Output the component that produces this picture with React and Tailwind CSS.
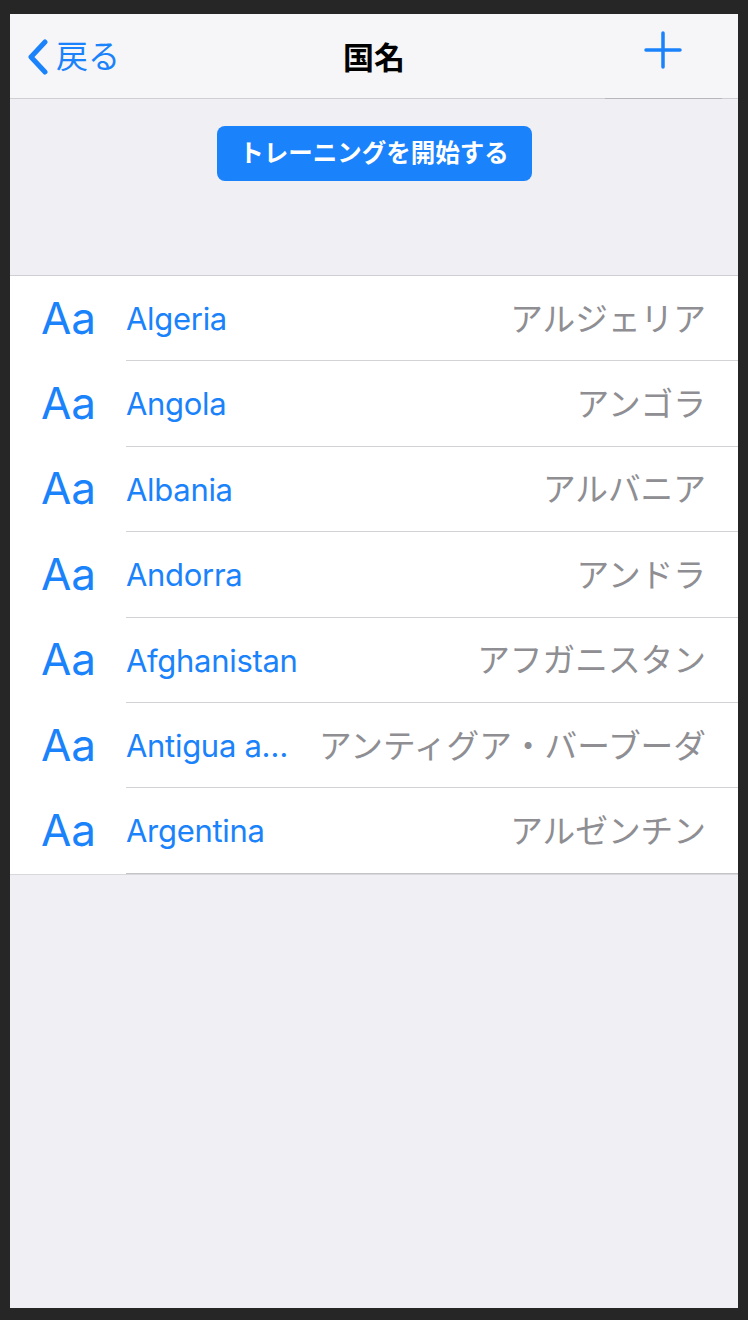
import React from "react";

const rows = [
  { en: "Algeria", ja: "アルジェリア" },
  { en: "Angola", ja: "アンゴラ" },
  { en: "Albania", ja: "アルバニア" },
  { en: "Andorra", ja: "アンドラ" },
  { en: "Afghanistan", ja: "アフガニスタン" },
  { en: "Antigua and Barbuda", ja: "アンティグア・バーブーダ" },
  { en: "Argentina", ja: "アルゼンチン" },
];

const font = { fontFamily: '"Inter", "Noto Sans CJK JP", sans-serif' };

const App = () => {
  return (
    <div className="w-[748px] h-[1320px] bg-[#262626] pt-[14px] pb-[12px] px-[10px]" style={font}>
      <div className="h-full bg-[#efeff4] flex flex-col">
        {/* NAV BAR */}
        <header className="relative h-[85px] shrink-0 bg-[#f6f6f8] border-b border-[#cfcfd3] flex items-center justify-between">
          <button className="flex items-center text-[#1a82fb] pl-[16px] pt-[2px]">
            <svg width="24" height="36" viewBox="0 0 24 36" className="mr-[6px]">
              <path d="M19 3 L5 18 L19 33" fill="none" stroke="#1a82fb" strokeWidth="5" strokeLinecap="round" strokeLinejoin="round" />
            </svg>
            <span className="text-[32px] leading-none">戻る</span>
          </button>
          <h1 className="absolute left-1/2 -translate-x-1/2 text-[31px] font-bold text-black leading-none pt-[2px]">国名</h1>
          <button className="pr-[56px] pb-[12px]">
            <svg width="38" height="38" viewBox="0 0 38 38">
              <path d="M19 2 V36 M2 19 H36" stroke="#1a82fb" strokeWidth="3.5" strokeLinecap="round" />
            </svg>
          </button>
          <div className="absolute right-[16px] bottom-[-1px] w-[117px] h-px bg-[#b8b8bc]"></div>
        </header>

        {/* TRAINING BUTTON */}
        <div className="h-[177px] shrink-0 flex justify-center pt-[27px] border-b border-[#cfcfd3]">
          <button className="h-[55px] w-[315px] bg-[#1a82fb] rounded-[8px] text-white font-bold text-[24.5px] leading-none">
            トレーニングを開始する
          </button>
        </div>

        {/* LIST */}
        <ul className="bg-white border-b border-[#d8d8dc]">
          {rows.map((row, i) => (
            <li key={i} className="flex items-center h-[85.4px]">
              <span className="w-[116px] shrink-0 pl-[31px] text-[44px] text-[#1a82fb] leading-none pb-[2px]">Aa</span>
              <div className={`flex-1 min-w-0 h-full flex items-center gap-[20px] pr-[32px] pt-[2px] ${i < rows.length - 1 ? "border-b border-[#d3d3d7]" : "border-b border-[#c4c4c8]"}`}>
                <span className="min-w-0 flex-1 truncate text-[31px] tracking-[-0.3px] text-[#1a82fb]">{row.en}</span>
                <span className="shrink-0 text-[32.7px] text-[#8e8e93]">{row.ja}</span>
              </div>
            </li>
          ))}
        </ul>
      </div>
    </div>
  );
};

export default App;
